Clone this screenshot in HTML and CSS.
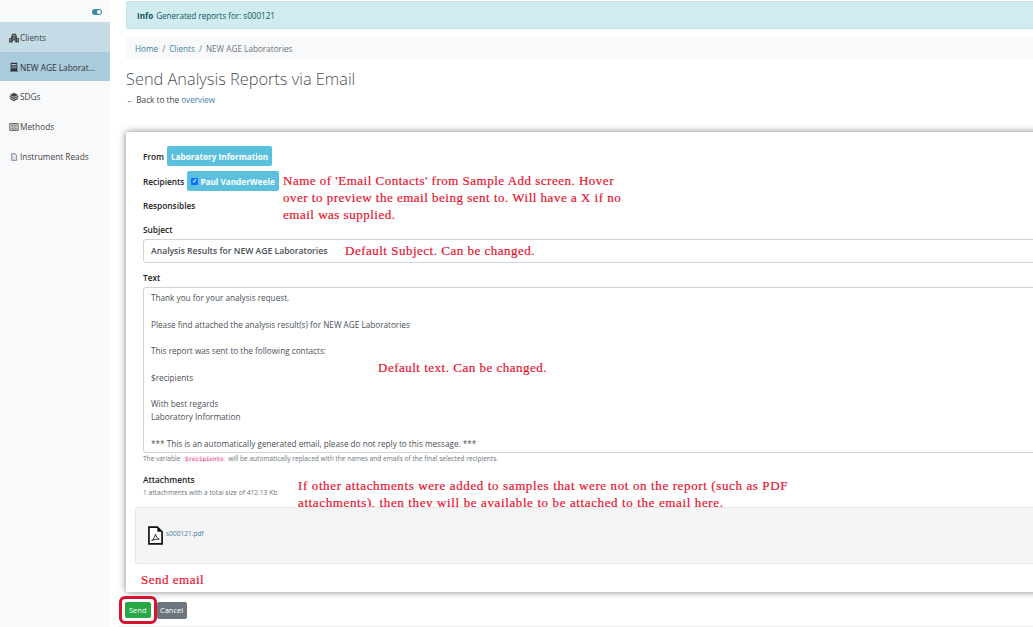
FILE: index.html
```html
<!DOCTYPE html>
<html lang="en">
<head>
<meta charset="utf-8">
<title>Send Analysis Reports via Email</title>
<link rel="stylesheet" href="styles.css">
</head>
<body>
<div class="app">
  <nav class="sidebar">
    <div class="toggle-row"><span class="toggle"><span class="knob"></span></span></div>
    <a class="nav-item open">
      <svg class="ico" viewBox="0 0 12 12"><path fill="#444" d="M0 11.500V6h2.500V3h1V1h5v2h1v3H12v5.500H7.500V9h-3v2.500z"/><path fill="#cfe0e8" d="M4.500 2.500h1v1h-1zM6.500 2.500h1v1h-1zM4.500 4.500h1v1h-1zM6.500 4.500h1v1h-1zM1 7h1v1H1zM1 9h1v1H1zM10 7h1v1h-1zM10 9h1v1h-1zM4.500 6.500h1v1h-1zM6.500 6.500h1v1h-1z"/></svg>
      <span>Clients</span></a>
    <a class="nav-item active">
      <svg class="ico" viewBox="0 0 12 12"><path fill="#333" d="M2 1h8v9.500h1v1H1v-1h1z"/><path fill="#a9cbdc" d="M3 2.500h6v1H3zM3 4.500h6v1H3zM3 6.500h6v1H3z"/></svg>
      <span>NEW AGE Laborat...</span></a>
    <a class="nav-item">
      <svg class="ico" viewBox="0 0 12 12"><path fill="#444" d="M6 1l5 2.500v5L6 11 1 8.500v-5z"/><path stroke="#f8f9fa" stroke-width=".8" fill="none" d="M1 4l5 2.500L11 4M1 6.500L6 9l5-2.500"/></svg>
      <span>SDGs</span></a>
    <a class="nav-item">
      <svg class="ico" viewBox="0 0 12 12"><path fill="none" stroke="#333" d="M1 2h10v8H1z"/><path stroke="#555" d="M6 2v8M2.500 4h2.500M2.500 6h2.500M2.500 8h2.500M7 4h2.500M7 6h2.500M7 8h2.500"/></svg>
      <span>Methods</span></a>
    <a class="nav-item">
      <svg class="ico small" viewBox="0 0 12 12"><path fill="#dde3ea" stroke="#556" d="M2.500 1h5l2.500 3v7H2.500z"/></svg>
      <span>Instrument Reads</span></a>
  </nav>

  <main class="main">
    <div class="alert"><b>Info</b> Generated reports for: s000121</div>
    <div class="crumbs"><a>Home</a><i>/</i><a>Clients</a><i>/</i><span>NEW AGE Laboratories</span></div>
    <h1>Send Analysis Reports via Email</h1>
    <p class="back">← Back to the <a>overview</a></p>

    <section class="card">
      <div class="meta-row"><b>From</b><span class="badge">Laboratory Information</span></div>
      <div class="meta-row"><b>Recipients</b><span class="badge"><span class="check">✓</span>Paul VanderWeele</span></div>
      <div class="meta-row plain"><b>Responsibles</b></div>

      <label class="field-label subject-label">Subject</label>
      <div class="input">Analysis Results for NEW AGE Laboratories</div>

      <label class="field-label text-label">Text</label>
      <div class="textarea">
        <p>Thank you for your analysis request.</p>
        <p>Please find attached the analysis result(s) for NEW AGE Laboratories</p>
        <p>This report was sent to the following contacts:</p>
        <p>$recipients</p>
        <p>With best regards<br>Laboratory Information</p>
        <p>*** This is an automatically generated email, please do not reply to this message. ***</p>
      </div>
      <small class="hint">The variable <code>$recipients</code> will be automatically replaced with the names and emails of the final selected recipients.</small>

      <label class="field-label att-label">Attachments</label>
      <small class="att-size">1 attachments with a total size of 412.13 Kb</small>
      <div class="attachments">
        <svg class="pdf" viewBox="0 0 16 20"><path fill="#fff" stroke="#111" stroke-width="1.800" d="M1 1h9l5 5v13H1z"/><path fill="#111" d="M10 1l5 5h-5z"/><path fill="none" stroke="#222" stroke-width="1" d="M8 8.500c-.5 2-1.500 5-4 7 2-1 5-2 8-1.500-2-1-3.500-3-4-5.500z"/></svg>
        <a>s000121.pdf</a>
      </div>
    </section>

    <div class="actions">
      <span class="ring"><button class="btn send">Send</button></span>
      <button class="btn cancel">Cancel</button>
    </div>
    <div class="rule"></div>
  </main>

  <div class="note n1">Name of 'Email Contacts' from Sample Add screen. Hover<br>over to preview the email being sent to. Will have a X if no<br>email was supplied.</div>
  <div class="note n2">Default Subject. Can be changed.</div>
  <div class="note n3">Default text. Can be changed.</div>
  <div class="note n4">If other attachments were added to samples that were not on the report (such as PDF<br>attachments), then they will be available to be attached to the email here.</div>
  <div class="note n5">Send email</div>
</div>
</body>
</html>
```
FILE: styles.css
```css
* { box-sizing: border-box; }
html, body { margin: 0; height: 100%; overflow: hidden; background: #fff; }
body { font-family: "Open Sans", "Liberation Sans", sans-serif; font-size: 8.200px; color: #333; }
a { color: #3f7f9f; }

.app { position: relative; display: flex; width: 1033px; height: 627px; overflow: hidden; }

.sidebar { flex: 0 0 110px; background: #f8f9fa; display: flex; flex-direction: column; }
.toggle-row { height: 22px; display: flex; justify-content: flex-end; align-items: flex-start; padding: 9px 8px 0 0; }
.toggle { width: 10px; height: 6px; border-radius: 3px; background: #3f87ad; display: flex; justify-content: flex-end; padding: 1px; }
.knob { width: 4px; height: 4px; border-radius: 50%; background: #fff; }
.nav-item { height: 30px; display: flex; align-items: center; gap: 1px; padding: 1px 0 0 9px; color: #444; font-size: 8.300px; }
.nav-item.open { background: #c5dce6; }
.nav-item.active { background: #a9cbdc; height: 29px; color: #333; }
.ico { width: 10px; height: 10px; flex: none; }
.ico.small { width: 8px; height: 8px; margin: 0 1px 0 1px; }

.main { flex: none; width: 940px; margin-left: 16px; display: flex; flex-direction: column; }
.main > * { flex: none; }
.alert { height: 28px; margin-top: 1px; background: #d1ecf1; border: 1px solid #bee5eb; border-radius: 2px; color: #0c5460; padding: 0 10px; display: flex; align-items: center; gap: 3px; font-size: 8.100px; }
.crumbs { height: 22px; margin-top: 8px; background: #f8f9fa; padding: 0 9px; display: flex; align-items: center; font-size: 8.200px; color: #6c757d; }
.crumbs i { font-style: normal; padding: 0 4px; }
h1 { margin: 9px 0 0; font-size: 16.350px; line-height: 22px; font-weight: 300; color: #4a5058; }
.back { margin: 4px 0 0; line-height: 12px; font-size: 8.200px; color: #444; }

.card { margin-top: 26px; height: 460px; width: 950px; background: #fff; border-radius: 2px; box-shadow: 0 0 7px rgba(0,0,0,.5); padding: 12px 18px 0 17px; display: flex; flex-direction: column; }
.meta-row { display: flex; align-items: center; gap: 3px; height: 24px; margin-bottom: 1px; font-size: 8.300px; color: #222; }
.meta-row b { font-weight: 600; }
.meta-row.plain { height: 21px; margin-top: 1px; }
.badge { display: inline-flex; align-items: center; height: 20px; padding: 0 4px; background: #5bc0de; border-radius: 2px; color: #fff; font-weight: 700; font-size: 8.200px; }
.check { display: inline-flex; align-items: center; justify-content: center; width: 7px; height: 7px; margin-right: 2px; border-radius: 1px; background: #0d6efd; font-size: 6px; line-height: 1; }

.field-label { display: block; font-weight: 600; font-size: 8.300px; line-height: 12px; color: #222; }
.subject-label { margin-top: 7px; }
.input { height: 24px; margin-top: 3px; border: 1px solid #ced4da; border-radius: 3px; padding: 0 7px; display: flex; align-items: center; font-weight: 600; font-size: 8.600px; color: #495057; }
.text-label { margin-top: 9px; }
.textarea { height: 166px; margin-top: 3px; border: 1px solid #ced4da; border-radius: 3px; padding: 3px 7px 0; font-size: 8.200px; line-height: 13.250px; color: #495057; }
.textarea p { margin: 0 0 13.250px; }
.hint { display: block; margin-top: 0; font-size: 6.580px; line-height: 11px; color: #6c757d; }
.hint code { font-family: "DejaVu Sans Mono", monospace; font-size: 5.800px; color: #e83e8c; background: #f8f0f4; padding: 0 2px; margin: 0 1px; }
.att-label { margin-top: 9px; }
.att-size { display: block; margin-top: 1px; font-size: 6.650px; line-height: 12px; color: #6c757d; }
.attachments { position: relative; z-index: 2; height: 57px; flex: none; margin: 8px -18px 0 -8px; background: #f5f5f5; border: 1px solid #e7e7e7; border-radius: 2px; padding: 0 0 0 12px; display: flex; align-items: flex-start; gap: 3px; font-size: 6.600px; }
.attachments a { margin-top: 21px; }
.pdf { width: 15px; height: 19px; margin-top: 18px; }

.actions { display: flex; align-items: center; gap: 0; margin: 4px 0 0 -7px; }
.ring { display: inline-flex; padding: 3px; border: 3px solid #d9132b; border-radius: 6px; background: #fff; }
.btn { border: 0; height: 16px; padding: 0 4px; border-radius: 2px; color: #fff; font: 400 7.500px "Open Sans", "Liberation Sans", sans-serif; }
.send { background: #28a745; }
.cancel { background: #6c757d; height: 17px; padding: 0 2px; width: 30px; }
.rule { height: 1px; margin: 2px 0 0 -8px; background: #eee; }

.note { position: absolute; font-family: "Liberation Serif", serif; font-size: 13px; line-height: 17px; letter-spacing: .5px; color: #e8112d; -webkit-text-stroke: .2px #e8112d; white-space: nowrap; }
.n1 { left: 283px; top: 172px; }
.n2 { left: 345px; top: 242px; }
.n3 { left: 378px; top: 359px; }
.n4 { left: 298px; top: 477px; letter-spacing: .62px; }
.n5 { left: 141px; top: 571px; }
```
